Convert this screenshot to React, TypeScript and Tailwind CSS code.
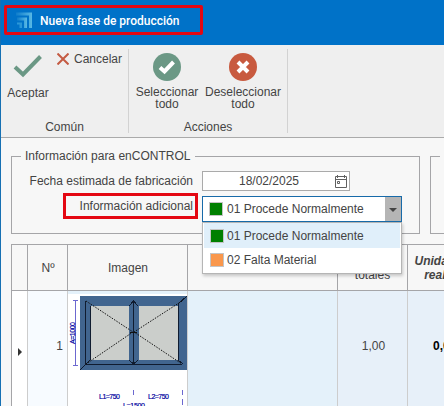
import React from "react";

function Logo() {
  return (
    <svg className="h-[17px] w-[17px] shrink-0" viewBox="0 0 17 17">
      <defs>
        <linearGradient id="fade" x1="0" x2="1" y1="0" y2="0">
          <stop offset="0" stopColor="#0f7dcb" />
          <stop offset="1" stopColor="#58b8e4" />
        </linearGradient>
      </defs>
      <path d="M0 .5H16V16H13V3.500H0Z" fill="url(#fade)" />
      <path d="M1 5.500H11V16H8V8.500H1Z" fill="url(#fade)" />
      <path d="M1 10.500H6V16H3.500V12.500H1Z" fill="#2b97d8" />
    </svg>
  );
}

function AcceptIcon() {
  return (
    <svg className="h-[24px] w-[30px]" viewBox="0 0 30 24">
      <path d="M2 13L10 20.5L27.5 2.5" fill="none" stroke="#6b9885" strokeWidth="4" />
    </svg>
  );
}

function CancelIcon() {
  return (
    <svg className="h-[12px] w-[12px]" viewBox="0 0 12 12">
      <path d="M.5 .5L11.5 11.5M11.5 .5L.5 11.5" stroke="#c45b43" strokeWidth="2" />
    </svg>
  );
}

function CircleIcon({ ok }: { ok: boolean }) {
  return (
    <svg className="h-[28px] w-[28px] shrink-0" viewBox="0 0 28 28">
      <circle cx="14" cy="14" r="14" fill={ok ? "#6b9885" : "#c85a3f"} />
      <path
        d={ok ? "M7 14.5L11.500 18.500L20.500 9" : "M9 9L19 19M19 9L9 19"}
        fill="none"
        stroke="#fff"
        strokeWidth="4"
      />
    </svg>
  );
}

function CalendarIcon() {
  return (
    <svg className="h-[13px] w-[12px]" viewBox="0 0 12 13" fill="none" stroke="#606060">
      <path d="M.5 1.5H11.5V12.5H.5ZM.5 4.5H11.5M2.5 0V3M9.5 0V3M2.5 6.5H4.5V8.5H2.5Z" />
    </svg>
  );
}

function WindowDrawing() {
  return (
    <svg className="block h-[112px] w-[119px]" viewBox="68 294 119 112">
      <rect x="68" y="294" width="119" height="112" fill="#fff" />
      <rect x="80" y="296" width="107" height="74" fill="#41658f" />
      <rect x="90" y="306" width="39" height="54" fill="#cbcecb" />
      <rect x="139" y="306" width="39" height="54" fill="#cbcecb" />
      <g fill="none" stroke="#101c30" shapeRendering="crispEdges">
        <path d="M85.500 301V364.500H182M133.500 301V364M90.500 306V360M178.500 303V360" />
        <path d="M80 370L90 360M187 296L178 304M129 306L133.500 301L138 306M129 360L133.500 364L138 360M178 360L183 364" />
      </g>
      <path
        d="M86 301L133 332L86 364M182 301L134 332L182 364"
        fill="none"
        stroke="#111"
        strokeDasharray="1.5 1.3"
      />
      <path d="M130 332.500H137" stroke="#111" />
      <path
        d="M75.500 300V366M73 300.500H78M73 365.500H78M133.500 390V395M182.500 390V395M182.500 399V405"
        stroke="#6c68d0"
        fill="none"
        shapeRendering="crispEdges"
      />
      <g fill="#0000a0" stroke="#0000a0" strokeWidth=".2" className="font-['Liberation_Sans',sans-serif] text-[7px]">
        <text transform="translate(75 344) rotate(-90)" textLength="22">A=1000</text>
        <text x="99" y="399" textLength="21">L1=750</text>
        <text x="148" y="399" textLength="21">L2=750</text>
        <text x="123" y="407.500" textLength="22">L=1500</text>
      </g>
    </svg>
  );
}

function Ribbon() {
  return (
    <div className="flex h-[93px] border-b border-[#aaa] bg-[#efefef] pt-1 text-center">
      <div className="h-[84px] w-[128px] border-r border-[#d2d2d2]">
        <div className="flex h-[68px]">
          <div className="w-[54px] pt-[5px]">
            <div className="flex h-[30px] justify-center"><AcceptIcon /></div>
            <div className="mt-[2px] h-[14px]">Aceptar</div>
          </div>
          <div className="flex h-[20px] items-center gap-[5px] pl-[2px]">
            <CancelIcon /><span>Cancelar</span>
          </div>
        </div>
        <div className="mt-[3px] h-[14px]">Común</div>
      </div>
      <div className="h-[84px] w-[159px] border-r border-[#d2d2d2]">
        <div className="flex h-[68px] pt-1">
          <div className="flex w-[76px] flex-col items-center">
            <CircleIcon ok />
            <div className="mt-[5px] leading-[12px]">Seleccionar<br />todo</div>
          </div>
          <div className="flex w-[76px] flex-col items-center">
            <CircleIcon ok={false} />
            <div className="mt-[5px] leading-[12px]">Deseleccionar<br />todo</div>
          </div>
        </div>
        <div className="mt-[3px] h-[14px]">Acciones</div>
      </div>
    </div>
  );
}

function Swatch({ orange = false }: { orange?: boolean }) {
  return (
    <span
      className={`block h-[14px] w-[14px] shrink-0 border border-[#c4c4c4] ${orange ? "bg-[#f9974c]" : "bg-[#008000]"}`}
    />
  );
}

function Information() {
  return (
    <div className="flex h-[78px] gap-[10px] pl-[10px]">
      <div className="relative h-[78px] w-[409px] shrink-0 border border-[#a5a5a8]">
        <div className="-mt-[9px] ml-[9px] h-[16px] w-[174px] bg-[#f7f7f7] pl-[4px] leading-[16px]">
          Información para enCONTROL
        </div>
        <div className="mt-[7px] flex h-[20px] items-center">
          <div className="w-[190px] pr-[9px] text-right">Fecha estimada de fabricación</div>
          <div className="flex h-[20px] w-[148px] items-center border border-[#aaa] bg-white pr-[2px]">
            <span className="flex-1 text-center">18/02/2025</span>
            <CalendarIcon />
          </div>
        </div>
        <div className="mt-[5px] flex h-[26px] items-center">
          <div className="w-[190px] pr-[9px] pb-[7px] text-right">Información adicional</div>
          <div className="flex h-[26px] w-[200px] items-center border border-[#176aa9] bg-white pl-[6px]">
            <Swatch />
            <span className="ml-[4px] flex-1">01 Procede Normalmente</span>
            <span className="flex h-full w-[16px] items-center justify-center bg-[#b5b5b5]">
              <svg className="mt-[2px] h-[4px] w-[8px]" viewBox="0 0 8 4"><path d="M0 0H8L4 4Z" fill="#444" /></svg>
            </span>
          </div>
        </div>
        <div className="absolute top-[36px] left-[51px] h-[26px] w-[135px] border-[3px] border-[#e40712]" />
        <div className="absolute top-[65px] left-[190px] z-10 h-[52px] w-[200px] border border-[#b5b5b5] bg-white px-px shadow-[1px_2px_3px_#0003]">
          <div className="flex h-[25px] items-center gap-[3px] bg-[#e0effa] pl-[6px] pt-px">
            <Swatch /><span>01 Procede Normalmente</span>
          </div>
          <div className="flex h-[24px] items-center gap-[3px] pl-[6px]">
            <Swatch orange /><span>02 Falta Material</span>
          </div>
        </div>
      </div>
      <div className="relative h-[78px] w-[20px] shrink-0 border border-[#a5a5a8]">
        <span className="absolute -top-px left-[9px] h-px w-[10px] bg-[#f7f7f7]" />
      </div>
    </div>
  );
}

function Grid() {
  return (
    <div className="mt-[10px] ml-[10px] grid h-[162px] w-[480px] grid-cols-[16px_40px_120px_150px_70px_83px] grid-rows-[47px_115px] border-l border-[#a5a5a8] text-center">
      {["", "Nº", "Imagen", ""].map((t, i) => (
        <div key={i} className="flex items-center justify-center border-y border-r border-[#a5a5a8] pl-px">{t}</div>
      ))}
      <div className="flex flex-col justify-center border-y border-r border-[#a5a5a8] leading-[14px]">
        <span>Unidades</span><span>totales</span>
      </div>
      <div className="flex flex-col justify-center border-y border-[#a5a5a8] pr-[16px] font-bold italic leading-[14px]">
        <span>Unidades</span><span>reales</span>
      </div>
      <div className="flex items-center justify-center border-r border-[#cdcdcd] bg-white pt-[6px]">
        <svg className="h-[8px] w-[4px]" viewBox="0 0 4 8"><path d="M0 0L4 4L0 8Z" fill="#333" /></svg>
      </div>
      <div className="flex items-center justify-end border-r border-[#cdcdcd] bg-[#f7fbff] pr-[4px] pb-[5px]">1</div>
      <div className="border-r border-[#cdcdcd] bg-[#e4f1fa] pt-[3px]"><WindowDrawing /></div>
      <div className="border-r border-[#cdcdcd] bg-[#e4f1fa]" />
      <div className="flex items-center justify-center border-r border-[#cdcdcd] bg-[#e7f0f9] pb-[5px] pl-[2px]">1,00</div>
      <div className="flex items-center bg-[#e7f0f9] pb-[5px] pl-[25px] font-bold text-black">0,00</div>
    </div>
  );
}

export default function App() {
  return (
    <main className="relative h-[406px] w-[444px] overflow-hidden border-l border-[#1670b3] bg-[#f7f7f7] font-['Liberation_Sans',Arial,sans-serif] text-[12px] leading-[14px] whitespace-nowrap text-[#444]">
      <header className="-ml-px flex h-[45px] bg-[#0072c8] pt-[12px] pl-[16px] text-white">
        <Logo />
        <span className="ml-[7px] pt-[2px] font-['Roboto',sans-serif] font-medium">Nueva fase de producción</span>
      </header>
      <Ribbon />
      <div className="h-[18px]" />
      <Information />
      <Grid />
      <div className="absolute top-[5px] left-[3px] h-[30px] w-[199px] rounded-[2px] border-[3px] border-[#e40712]" />
    </main>
  );
}
